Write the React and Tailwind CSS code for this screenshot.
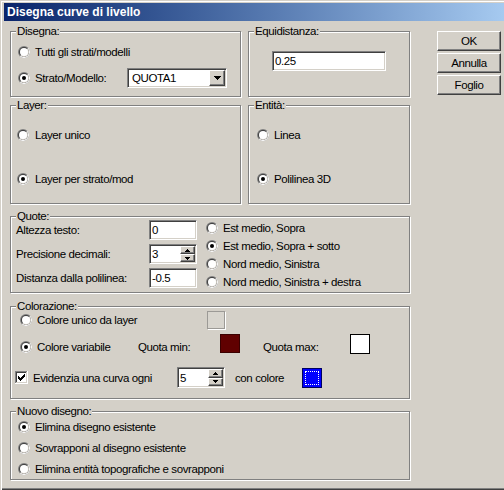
import React from "react";

const sunken =
  "border border-t-[#808080] border-l-[#808080] border-b-white border-r-white shadow-[inset_1px_1px_0_#404040,inset_-1px_-1px_0_#d4d0c8]";
const raised =
  "border border-t-white border-l-white border-b-[#404040] border-r-[#404040] shadow-[inset_-1px_-1px_0_#808080] bg-[#d4d0c8]";

function Radio({ checked }) {
  return (
    <svg width="12" height="12" viewBox="0 0 12 12" className="shrink-0">
      <circle cx="6" cy="6" r="6" fill="#808080" />
      <path d="M10.243 1.757 A6 6 0 0 1 1.757 10.243 Z" fill="#ffffff" />
      <circle cx="6" cy="6" r="5" fill="#404040" />
      <path d="M9.536 2.464 A5 5 0 0 1 2.464 9.536 Z" fill="#d4d0c8" />
      <circle cx="6" cy="6" r="4" fill="#ffffff" />
      {checked && <circle cx="6" cy="6" r="2" fill="#000000" />}
    </svg>
  );
}

function Checkbox({ checked }) {
  const px = [
    [6, 0],
    [5, 1], [6, 1],
    [0, 2], [4, 2], [5, 2], [6, 2],
    [0, 3], [1, 3], [3, 3], [4, 3], [5, 3],
    [0, 4], [1, 4], [2, 4], [3, 4], [4, 4],
    [1, 5], [2, 5], [3, 5],
    [2, 6],
  ];
  return (
    <svg width="13" height="13" viewBox="0 0 13 13" className="shrink-0" shapeRendering="crispEdges">
      <rect x="0" y="0" width="13" height="13" fill="#ffffff" />
      <rect x="0" y="0" width="12" height="12" fill="#808080" />
      <rect x="1" y="1" width="11" height="11" fill="#d4d0c8" />
      <rect x="1" y="1" width="10" height="10" fill="#404040" />
      <rect x="2" y="2" width="9" height="9" fill="#ffffff" />
      {checked && px.map(([x, y], i) => <rect key={i} x={3 + x} y={3 + y} width="1" height="1" fill="#000" />)}
    </svg>
  );
}

function Frame({ label, className, children }) {
  return (
    <div className={"relative border border-[#808080] shadow-[inset_1px_1px_0_#fff,1px_1px_0_#fff] " + className}>
      <span className="absolute left-[5px] top-[-8px] px-[1px] bg-[#d4d0c8] leading-[14px] whitespace-nowrap">{label}</span>
      {children}
    </div>
  );
}

function RadioRow({ checked, text, className = "", gap = "ml-[5px]" }) {
  return (
    <div className={"flex items-center h-[16px] " + className}>
      <Radio checked={checked} />
      <span className={gap + " whitespace-nowrap"}>{text}</span>
    </div>
  );
}

function TextBox({ value, className }) {
  return (
    <div className={sunken + " bg-white flex items-center pl-[2px] " + className}>
      <span className="whitespace-nowrap">{value}</span>
    </div>
  );
}

function Spinner({ value, className }) {
  return (
    <div className={sunken + " bg-white flex items-stretch p-[1px] " + className}>
      <div className="flex-1 flex items-center pl-[1px]">{value}</div>
      <div className="w-[15px] flex flex-col">
        <div className={raised + " flex-1 flex items-center justify-center"}>
          <svg width="5" height="3" viewBox="0 0 5 3" shapeRendering="crispEdges"><path d="M2 0h1v1h1v1h1v1H0V2h1V1h1z" fill="#000" /></svg>
        </div>
        <div className={raised + " flex-1 flex items-center justify-center"}>
          <svg width="5" height="3" viewBox="0 0 5 3" shapeRendering="crispEdges"><path d="M0 0h5v1H4v1H3v1H2V2H1V1H0z" fill="#000" /></svg>
        </div>
      </div>
    </div>
  );
}

function Button({ children }) {
  return <div className={raised + " h-[20px] w-[64px] flex items-center justify-center"}>{children}</div>;
}

export default function App() {
  return (
    <div className="w-[504px] h-[490px] bg-[#d4d0c8] overflow-hidden text-black text-[11.5px] tracking-[-0.4px] leading-[14px] font-['Liberation_Sans',sans-serif] shadow-[inset_1px_0_0_#d4d0c8,inset_0_1px_0_#d4d0c8,inset_2px_0_0_#fff,inset_0_2px_0_#fff,inset_0_-1px_0_#404040,inset_0_-2px_0_#808080]">
      <div className="mt-[3px] ml-[4px] h-[18px] flex items-center pl-[3px] bg-linear-to-r from-[#0a246a] to-[#a6caf0] text-white font-bold text-[12px] tracking-normal">
        Disegna curve di livello
      </div>
      <div className="flex pt-[10px]">
        <div className="ml-[10px] w-[401px] flex flex-col">
          <div className="flex gap-[7px]">
            <Frame label="Disegna:" className="w-[231px] h-[66px] pt-[12px] pl-[7px]">
              <RadioRow text="Tutti gli strati/modelli" />
              <div className="flex items-center h-[20px] mt-[8px]">
                <Radio checked />
                <span className="ml-[5px] w-[92px] whitespace-nowrap">Strato/Modello:</span>
                <div className={sunken + " bg-white w-[100px] h-[20px] flex items-stretch p-[1px]"}>
                  <div className="flex-1 flex items-center pl-[3px]">QUOTA1</div>
                  <div className={raised + " w-[16px] flex items-center justify-center"}>
                    <svg width="7" height="4" viewBox="0 0 7 4" shapeRendering="crispEdges"><path d="M0 0h7v1H6v1H5v1H4v1H3V3H2V2H1V1H0z" fill="#000" /></svg>
                  </div>
                </div>
              </div>
            </Frame>
            <Frame label="Equidistanza:" className="w-[162px] h-[66px] pt-[19px] pl-[23px]">
              <TextBox value="0.25" className="w-[114px] h-[20px]" />
            </Frame>
          </div>

          <div className="flex gap-[7px] mt-[8px]">
            <Frame label="Layer:" className="w-[231px] h-[99px] pt-[21px] pl-[6px]">
              <RadioRow text="Layer unico" gap="ml-[6px]" />
              <RadioRow checked text="Layer per strato/mod" gap="ml-[6px]" className="mt-[28px]" />
            </Frame>
            <Frame label="Entità:" className="w-[162px] h-[99px] pt-[21px] pl-[8px]">
              <RadioRow text="Linea" />
              <RadioRow checked text="Polilinea 3D" className="mt-[28px]" />
            </Frame>
          </div>

          <Frame label="Quote:" className="mt-[12px] w-[400px] h-[77px] pt-[2px] flex items-start">
            <div className="pl-[5px] pt-[1px] flex flex-col gap-[4px]">
              <div className="flex items-center h-[20px]">
                <span className="w-[133px] whitespace-nowrap">Altezza testo:</span>
                <TextBox value="0" className="w-[48px] h-[20px]" />
              </div>
              <div className="flex items-center h-[20px]">
                <span className="w-[133px] whitespace-nowrap">Precisione decimali:</span>
                <Spinner value="3" className="w-[48px] h-[20px]" />
              </div>
              <div className="flex items-center h-[20px]">
                <span className="w-[133px] whitespace-nowrap">Distanza dalla polilinea:</span>
                <TextBox value="-0.5" className="w-[48px] h-[20px]" />
              </div>
            </div>
            <div className="ml-[9px] flex flex-col">
              <div className="flex items-center h-[18px]"><Radio /><span className="ml-[5px] whitespace-nowrap">Est medio, Sopra</span></div>
              <div className="flex items-center h-[18px]"><Radio checked /><span className="ml-[5px] whitespace-nowrap">Est medio, Sopra + sotto</span></div>
              <div className="flex items-center h-[18px]"><Radio /><span className="ml-[5px] whitespace-nowrap">Nord medio, Sinistra</span></div>
              <div className="flex items-center h-[18px]"><Radio /><span className="ml-[5px] whitespace-nowrap">Nord medio, Sinistra + destra</span></div>
            </div>
          </Frame>

          <Frame label="Colorazione:" className="mt-[13px] w-[400px] h-[93px] pt-[4px]">
            <div className="flex items-center h-[18px] pl-[9px]">
              <Radio />
              <span className="ml-[5px] w-[170px] whitespace-nowrap">Colore unico da layer</span>
              <div className="w-[18px] h-[18px] border border-[#9c9a96] bg-[#d8d5ce] shadow-[1px_1px_0_#fff]" />
            </div>
            <div className="flex items-center h-[25px] pl-[9px] mt-[5px]">
              <Radio checked />
              <span className="ml-[5px] w-[101px] whitespace-nowrap">Colore variabile</span>
              <span className="w-[82px] whitespace-nowrap">Quota min:</span>
              <div className="self-start w-[20px] h-[19px] border border-[#3a0000] bg-[#600000]" />
              <span className="ml-[23px] w-[87px] whitespace-nowrap">Quota max:</span>
              <div className="self-start w-[20px] h-[20px] border border-black bg-white" />
            </div>
            <div className="flex items-center h-[21px] pl-[4px] mt-[8px]">
              <Checkbox checked />
              <span className="ml-[5px] w-[144px] whitespace-nowrap">Evidenzia una curva ogni</span>
              <Spinner value="5" className="w-[48px] h-[21px]" />
              <span className="ml-[10px] w-[67px] whitespace-nowrap">con colore</span>
              <div className="w-[20px] h-[20px] border border-[#000060] bg-[#0000ff] flex p-[2px]">
                <div className="flex-1 border border-dotted border-white" />
              </div>
            </div>
          </Frame>

          <Frame label="Nuovo disegno:" className="mt-[12px] w-[400px] h-[69px] pt-[7px] pl-[7px] flex flex-col gap-[5px]">
            <RadioRow checked text="Elimina disegno esistente" />
            <RadioRow text="Sovrapponi al disegno esistente" />
            <RadioRow text="Elimina entità topografiche e sovrapponi" />
          </Frame>
        </div>

        <div className="ml-[26px] w-[64px] flex flex-col gap-[2px]">
          <Button>OK</Button>
          <Button>Annulla</Button>
          <Button>Foglio</Button>
        </div>
      </div>
    </div>
  );
}
